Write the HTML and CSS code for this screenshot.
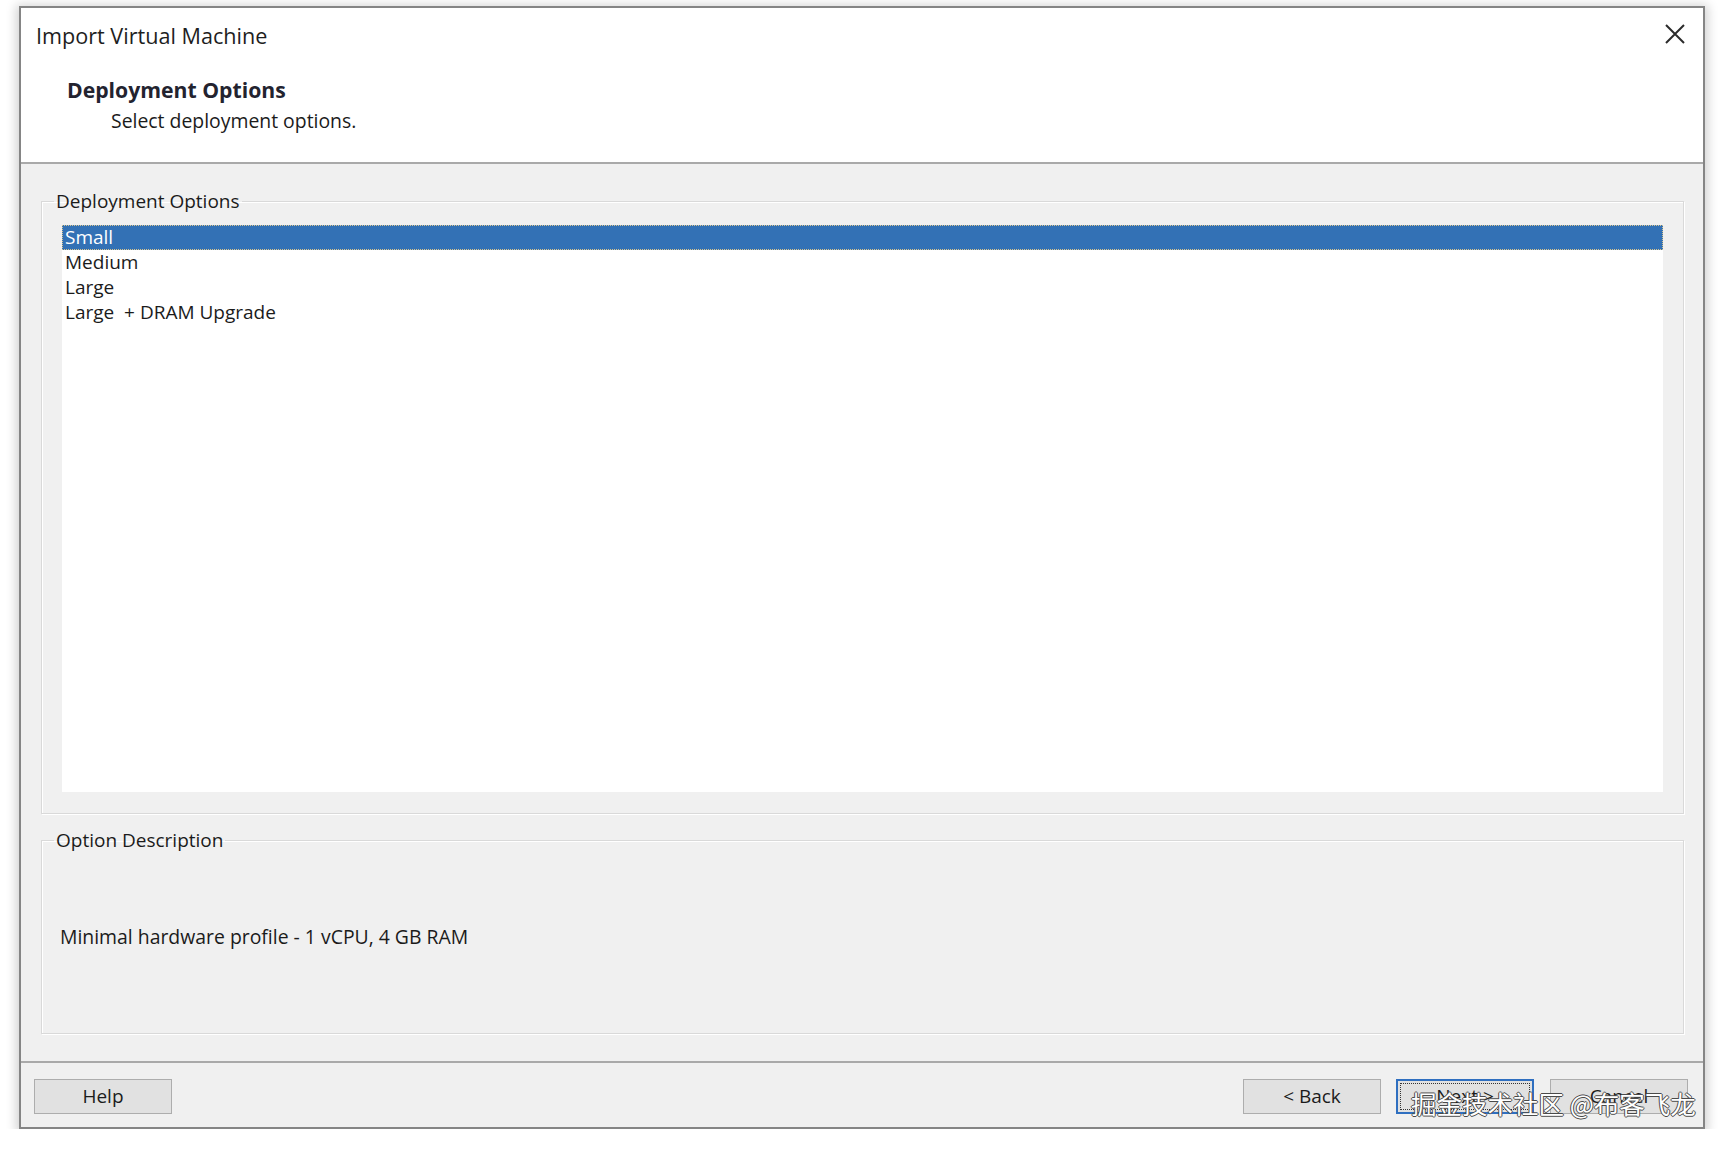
FILE: index.html
```html
<!DOCTYPE html>
<html lang="en">
<head>
<meta charset="utf-8">
<title>Import Virtual Machine</title>
<link rel="stylesheet" href="styles.css">
</head>
<body>
<div class="dialog">
  <div class="header">
    <div class="titlebar">
      <span class="title">Import Virtual Machine</span>
      <svg class="close" width="20" height="20" viewBox="0 0 20 20" aria-label="Close">
        <path d="M1 1 L19 19 M19 1 L1 19" stroke="#2b2b2b" stroke-width="2" fill="none"/>
      </svg>
    </div>
    <div class="heading">Deployment Options</div>
    <div class="subheading">Select deployment options.</div>
  </div>
  <div class="body">
    <fieldset class="group group-options">
      <legend>Deployment Options</legend>
      <ul class="listbox">
        <li class="item selected">Small</li>
        <li class="item">Medium</li>
        <li class="item">Large</li>
        <li class="item">Large&nbsp; + DRAM Upgrade</li>
      </ul>
    </fieldset>
    <fieldset class="group group-desc">
      <legend>Option Description</legend>
      <p class="desc">Minimal hardware profile - 1 vCPU, 4 GB RAM</p>
    </fieldset>
  </div>
  <div class="footer">
    <button class="btn">Help</button>
    <div class="spacer"></div>
    <button class="btn">&lt; Back</button>
    <button class="btn primary">Next &gt;</button>
    <button class="btn cancel">Cancel</button>
    <div class="watermark">掘金技术社区 @布客飞龙</div>
  </div>
</div>
</body>
</html>
```
FILE: styles.css
```css
html, body {
  margin: 0;
  padding: 0;
  background: #ffffff;
}

body {
  font-family: "Open Sans", "Noto Sans", sans-serif;
  color: #1b1b1b;
}

.dialog {
  margin: 6px 0 0 19px;
  width: 1686px;
  height: 1123px;
  box-sizing: border-box;
  border: 2px solid #858585;
  background: #f0f0f0;
  box-shadow: 0 2px 10px 3px rgba(0, 0, 0, 0.18);
  display: flex;
  flex-direction: column;
}

.header {
  height: 157px;
  box-sizing: border-box;
  background: #ffffff;
  border-bottom: 2px solid #a9a9a9;
  padding: 14px 18px 0 15px;
}

.titlebar {
  display: flex;
  justify-content: space-between;
  align-items: flex-start;
}

.title {
  font-size: 21.6px;
  line-height: 28px;
  color: #1e1e1e;
}

.close {
  margin-top: 2px;
  display: block;
}

.heading {
  margin: 26px 0 0 31px;
  font-size: 21.2px;
  font-weight: 700;
  line-height: 28px;
  color: #23232f;
}

.subheading {
  margin: 4px 0 0 75px;
  font-size: 19.4px;
  line-height: 26px;
  color: #1b1b1b;
}

.body {
  flex: 1;
  padding: 24px 19px 27px 20px;
  background: #f0f0f0;
}

.group {
  margin: 0;
  border: 1px solid #d9d9d9;
  box-shadow: inset 1px 1px 0 #ffffff, 1px 1px 0 #ffffff;
  min-width: 0;
}

.group legend {
  padding: 0 2px;
  font-size: 19px;
  line-height: 26px;
  color: #1b1b1b;
}

.group-options {
  padding: 11px 20px 21px 12px;
}

.group-desc {
  margin-top: 13px;
  padding: 71px 20px 83px 12px;
}

.listbox {
  list-style: none;
  margin: 0 0 0 8px;
  padding: 0;
  height: 567px;
  background: #ffffff;
}

.item {
  font-size: 19px;
  line-height: 25px;
  padding-left: 3px;
  color: #1b1b1b;
}

.item.selected {
  background: #3371b5;
  color: #ffffff;
  outline: 1px dotted #d9c48e;
  outline-offset: -1px;
}

.desc {
  margin: 0 0 0 6px;
  font-size: 19.4px;
  line-height: 26px;
  color: #1b1b1b;
}

.footer {
  position: relative;
  height: 66px;
  box-sizing: border-box;
  border-top: 2px solid #a9a9a9;
  padding: 16px 15px 0 13px;
  display: flex;
  align-items: flex-start;
  background: #f0f0f0;
}

.spacer {
  flex: 1;
}

.btn {
  width: 138px;
  height: 35px;
  box-sizing: border-box;
  margin: 0;
  padding: 0;
  background: #e1e1e1;
  border: 1px solid #adadad;
  font-family: "Open Sans", "Noto Sans", sans-serif;
  font-size: 19px;
  line-height: 31px;
  color: #1b1b1b;
}

.btn.primary {
  margin-left: 15px;
  border: 2px solid #2f6fc0;
  outline: 1px dotted #333333;
  outline-offset: -5px;
}

.btn.cancel {
  margin-left: 16px;
}

.watermark {
  position: absolute;
  left: 1390px;
  top: 27px;
  font-family: "Noto Sans CJK SC", "Noto Sans", sans-serif;
  font-size: 25.5px;
  line-height: 26px;
  white-space: nowrap;
  color: #ffffff;
  text-shadow: 1px 0 #4a4a4a, -1px 0 #4a4a4a, 0 1px #4a4a4a, 0 -1px #4a4a4a;
}
```
